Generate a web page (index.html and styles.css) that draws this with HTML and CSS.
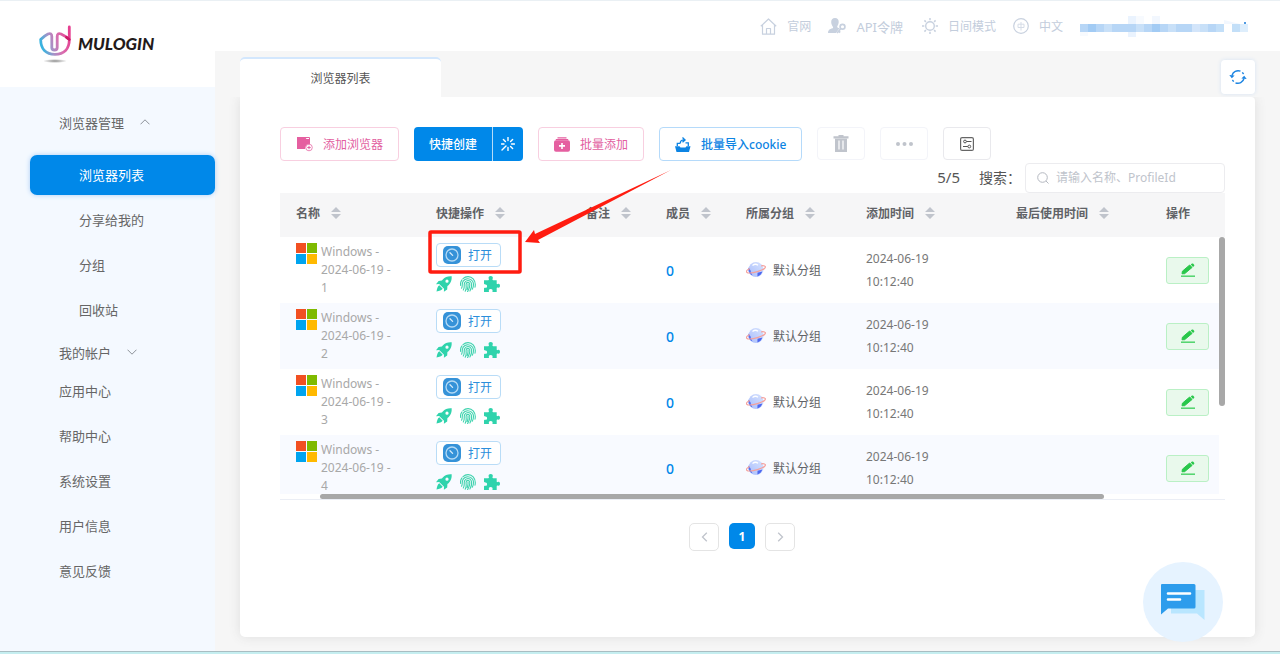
FILE: index.html
```html
<!DOCTYPE html>
<html lang="zh-CN">
<head>
<meta charset="utf-8">
<meta name="viewport" content="width=device-width, initial-scale=1">
<title>MuLogin</title>
<link rel="stylesheet" href="styles.css">
</head>
<body>
<svg class="sprite" aria-hidden="true">
  <defs>
    <linearGradient id="logo-grad" x1="0" y1="0.6" x2="1" y2="0.3">
      <stop offset="0" stop-color="#35b4e0"/>
      <stop offset="0.3" stop-color="#a394c8"/>
      <stop offset="0.6" stop-color="#d86fb0"/>
      <stop offset="1" stop-color="#e63f90"/>
    </linearGradient>
    <radialGradient id="logo-shadow">
      <stop offset="0" stop-color="#8c8c8c"/>
      <stop offset="1" stop-color="#8c8c8c" stop-opacity="0"/>
    </radialGradient>
    <linearGradient id="planet-grad" x1="0" y1="1" x2="1" y2="0">
      <stop offset="0" stop-color="#a9bdfb"/>
      <stop offset="1" stop-color="#d7e3ff"/>
    </linearGradient>
  </defs>
  <symbol id="i-sort" viewBox="0 0 10 12">
    <path d="M5 0 10 5H0zM5 12 0 7H10z" fill="#c0c4cc"/>
  </symbol>
  <symbol id="i-windows" viewBox="0 0 21 21">
    <path d="M0 0h10v10H0z" fill="#f25022"/><path d="M11 0h10v10H11z" fill="#7fba00"/>
    <path d="M0 11h10v10H0z" fill="#00a4ef"/><path d="M11 11h10v10H11z" fill="#ffb900"/>
  </symbol>
  <symbol id="i-dial" viewBox="0 0 18 18">
    <rect width="18" height="18" rx="5" fill="#3592d8"/>
    <circle cx="9" cy="9" r="6" fill="none" stroke="#b4daf5" stroke-width="1.3"/>
    <path d="M7 6.800 9.600 9.400" stroke="#d5ebfa" stroke-width="1.300" stroke-linecap="round"/>
  </symbol>
  <symbol id="i-rocket" viewBox="0 0 16 16">
    <path fill="#2fd3ac" fill-rule="evenodd" d="M15.700.3C12 0 9 1 6.800 3.500L5.900 4.600 2.600 4.900 0 8.300l3.200-.2L8 12.800l-.1 3L11.200 13.400l.2-3.300 1.100-.9C15 7 15.900 4 15.700.3zM11 6.800a1.600 1.600 0 1 1 0-3.200 1.600 1.600 0 0 1 0 3.200z"/>
    <path fill="#2fd3ac" d="M3.300 9.300 6.700 12.700C5.500 14.600 3.500 14.700.5 15.400 1.200 12.500 1.400 10.400 3.300 9.300z"/>
  </symbol>
  <symbol id="i-finger" viewBox="0 0 16 16">
    <g fill="none" stroke="#3fd3ae" stroke-width="1.100" stroke-linecap="round">
      <path d="M3 2.600C6-.2 10.500 0 13.200 2.800 15.300 5.200 15.700 8 15 11.200"/>
      <path d="M.6 9.500C.3 7.200.8 5.300 2 3.900M1.600 12.300C3 9.500 1.500 8.300 3 5.500 5 1.900 10.500 1.800 12.600 5.200 14 7.600 13.500 10.800 12.300 13.300"/>
      <path d="M3.300 14C5.200 11.100 3.500 9.200 4.600 6.700 6 3.700 10 3.900 11.200 6.600 12.200 9.300 11.200 12.500 9.900 14.900"/>
      <path d="M5.200 15.200C7.200 12 5.500 9.500 6.300 7.500 7 5.900 9 6 9.600 7.600 10.200 10 9.200 13 7.600 15.600M8 8.100C8.200 10.400 7.900 12 7.200 13.500"/>
    </g>
  </symbol>
  <symbol id="i-puzzle" viewBox="0 0 16 16">
    <path fill="#2fd3ac" d="M0 4.200h4.200C5 4.200 5.100 3.600 4.800 3 4 1.300 5.100 0 6.700 0s2.700 1.300 1.900 3c-.3.600-.2 1.200.6 1.200h3.500v3.300c0 .7.500.8 1.100.5C15.100 7.400 16 8.500 16 9.800s-.9 2.400-2.200 1.800c-.6-.3-1.100-.1-1.100.6V16H9.200c-.8 0-.9-.6-.7-1.100.4-1.100-.5-1.900-1.800-1.900s-2.200.8-1.800 1.900c.2.500.1 1.100-.7 1.100H0v-3.600c0-.7.600-.7 1.100-.6 1.200.3 2-.5 2-1.600s-.8-2-2-1.600C.6 8.400 0 8.200 0 7.600z"/>
  </symbol>
  <symbol id="i-planet" viewBox="0 0 20 18">
    <circle cx="10" cy="8.500" r="7.500" fill="url(#planet-grad)"/>
    <path d="M2.600 6.600C3.500 8.500 5 9 5 11.500l1.500 3C3.500 13.600 1.700 10 2.600 6.600z" fill="#5572f3"/>
    <path d="M11.500 11.800c2-.3 3-1.500 4.800-1-1 2.800-2.800 4-4.900 4.700z" fill="#4d68f0"/>
    <path d="M6.500 4.400c2-1.500 4-1.400 5.500-.2" stroke="#fff" stroke-width="1.300" fill="none"/>
    <path d="M3.400 7.800C-.2 9.500-.4 11.200 1.800 11.800 6 12.800 17.500 9.500 19.200 6.600 20 5 17.800 4.500 15.600 4.800" fill="none" stroke="#f4a09c" stroke-width="1.200" stroke-linecap="round"/>
  </symbol>
  <symbol id="i-edit" viewBox="0 0 14 14">
    <path d="M1 10.800 1.400 8.200 8.700 2 11 4.500 3.600 10.700z" fill="#28c74a" stroke="#28c74a" stroke-linejoin="round"/>
    <path d="M9.800 1.500 11 .6q.7-.4 1.300.2l.8.9q.6.700 0 1.300L12 4z" fill="#28c74a"/>
    <path d="M0 13.200H14" stroke="#4fd36b" stroke-width="1.500"/>
  </symbol>
</svg>

<div class="page">
  <div class="layout">
    <aside class="sidebar">
      <a class="logo" href="#">
        <svg class="logo-mark" viewBox="0 0 33 38" aria-hidden="true">
          <ellipse cx="16" cy="36" rx="12" ry="2" fill="url(#logo-shadow)"/>
          <path d="M30.300 2V14.500C30.300 24 25 29.300 16 29.300S1.700 24 1.700 14.500Q5 11 9 9Q12.800 7.500 12.800 11.500V22.500Q12.800 25 15.500 25T18.200 22.500V11.500Q18.200 7.500 22 9Q26.500 11 30.300 14.500" fill="none" stroke="url(#logo-grad)" stroke-width="2.800" stroke-linecap="round" stroke-linejoin="round"/>
          <path d="M27.500 12.300 30.300 14.500" fill="none" stroke="#cb1a68" stroke-width="2.800" stroke-linecap="round"/>
        </svg>
        <span class="logo-text">MULOGIN</span>
      </a>
      <nav class="menu">
        <button class="menu-head" type="button">浏览器管理
          <svg class="caret" viewBox="0 0 10 6" aria-hidden="true"><path d="M.5 5.300 5 .8 9.500 5.300" fill="none" stroke="#8d9299"/></svg>
        </button>
        <div class="submenu">
          <a class="menu-item sub active" href="#">浏览器列表</a>
          <a class="menu-item sub" href="#">分享给我的</a>
          <a class="menu-item sub" href="#">分组</a>
          <a class="menu-item sub" href="#">回收站</a>
        </div>
        <button class="menu-head" type="button">我的帐户
          <svg class="caret" viewBox="0 0 10 6" aria-hidden="true"><path d="M.5 .7 5 5.200 9.500 .7" fill="none" stroke="#8d9299"/></svg>
        </button>
        <div class="mainmenu">
          <a class="menu-item" href="#">应用中心</a>
          <a class="menu-item" href="#">帮助中心</a>
          <a class="menu-item" href="#">系统设置</a>
          <a class="menu-item" href="#">用户信息</a>
          <a class="menu-item" href="#">意见反馈</a>
        </div>
      </nav>
    </aside>

    <div class="content">
      <header class="topbar">
        <a class="top-link" href="#">
          <svg width="17" height="17" viewBox="0 0 17 17" aria-hidden="true"><path d="M.8 8.200 8.500 1l7.700 7.200M2.500 7v9.200h12V7M6.500 16v-5.500h4V16" fill="none" stroke="#c8d1df" stroke-width="1.200" stroke-linejoin="round"/></svg>
          官网</a>
        <a class="top-link api" href="#">
          <svg width="18" height="16" viewBox="0 0 18 16" aria-hidden="true"><path d="M7 0c2.600 0 3.900 1.700 3.700 4.200C10.500 6.500 9.500 7.600 9.200 8.500c0 1 1 1.500 2.300 1.800L8 15H0c.2-3 1.500-3.800 4.700-4.700.6-.3.500-1.300 0-1.900C3.900 7.300 3.300 6 3.200 4.200 3.100 1.700 4.400 0 7 0z" fill="#c8d1df"/><circle cx="14.500" cy="8.800" r="2.400" fill="#fff" stroke="#c8d1df" stroke-width="1.700"/><path d="M12.700 10.700 9 15M10.700 13.200l1.500 1.300" stroke="#c8d1df" stroke-width="1.700"/></svg>
          API令牌</a>
        <a class="top-link" href="#">
          <svg width="16" height="16" viewBox="0 0 16 16" aria-hidden="true"><circle cx="8" cy="8" r="4.300" fill="none" stroke="#c8d1df" stroke-width="1.400"/><path d="M8 0v2.300M8 13.700V16M0 8h2.300M13.700 8H16M2.400 2.400l1.500 1.500M12.100 12.100l1.500 1.500M2.400 13.600l1.500-1.500M12.100 3.900l1.500-1.500" stroke="#c8d1df" stroke-width="1.500"/></svg>
          日间模式</a>
        <a class="top-link" href="#">
          <svg width="16" height="16" viewBox="0 0 16 16" aria-hidden="true"><circle cx="8" cy="8" r="7.300" fill="none" stroke="#c8d1df" stroke-width="1.200"/><path d="M5 6.200h6v3.300H5zM8 4v8.500" fill="none" stroke="#d5dce7"/></svg>
          中文</a>
        <svg class="user-mask" width="168" height="28" viewBox="0 -4 168 28" aria-hidden="true">
          <path d="M48 0h8v8h-8zM48 16h8v5h-8z" fill="#eaf3fe"/><path d="M56 0h8v8h-8zM0 16h8v4H0z" fill="#f7fafe"/><path d="M72 0h8v8h-8zM144 4l16 4h-16z" fill="#f2f7fe"/>
          <path d="M0 8h144v8H0z" fill="#b7d6f6"/>
          <path d="M8 8h8v8H8zM72 8h8v8h-8z" fill="#a2cbf4"/>
          <path d="M24 8h8v8h-8zM56 8h8v8h-8zM88 8h8v8h-8zM120 8h8v8h-8z" fill="#c8e0f8"/>
          <path d="M112 8h8v8h-8z" fill="#d3e5fa"/><path d="M152 8h8v8h-8zM136 8h8v8h-8z" fill="#c3dff8"/><path d="M160 8h8v8h-8z" fill="#deeefc"/>
          <circle cx="165" cy="7" r="1" fill="#1479d8"/>
        </svg>
      </header>

      <main class="main">
        <div class="tab-row">
          <button class="tab" type="button">浏览器列表</button>
          <button class="refresh" type="button" aria-label="刷新">
            <svg width="18" height="16" viewBox="0 0 18 16" aria-hidden="true"><path d="M3 6.500A6.300 6.300 0 0 1 11.500 2.200M13.300 3.400 14.600 5M15 9.500A6.300 6.300 0 0 1 6.500 13.800M4.700 12.600 3.400 11" fill="none" stroke="#1b84e2" stroke-width="1.400"/><path d="M.3 6 5.600 6.600 2.800 9.300zM17.700 10 12.400 9.400 15.200 6.700z" fill="#1b84e2"/></svg>
          </button>
        </div>
        <section class="card">
          <div class="toolbar">
            <button class="btn pink" type="button">
              <svg width="17" height="16" viewBox="0 0 17 16" aria-hidden="true"><path d="M1 1h8l1.500 2H14v6a4 4 0 0 0-5 4H1z" fill="#e55fa0"/><path d="M9 1.500h4.500v2" fill="none" stroke="#e55fa0"/><circle cx="13" cy="11.500" r="3.300" fill="#fff" stroke="#ec86b7"/><path d="M11.300 11.500h3.400M13 9.800v3.400" stroke="#e55fa0"/></svg>
              添加浏览器</button>
            <div class="split">
              <button class="split-main" type="button">快捷创建</button>
              <button class="split-side" type="button" aria-label="快捷设置">
                <svg width="14" height="14" viewBox="0 0 14 14" aria-hidden="true"><path d="M7 .5v3M7 10.500v3M10.500 7h3M9.600 4.400l2-2M9.600 9.600l2 2M4.400 4.400l-2-2M5 9 1 13M.5 7h2.500" stroke="#fff" stroke-width="1.400" stroke-linecap="round"/></svg>
              </button>
            </div>
            <button class="btn pink" type="button">
              <svg width="16" height="15" viewBox="0 0 16 15" aria-hidden="true"><path d="M3.500 .8h9M1.800 2.600h12.400" stroke="#e55fa0" stroke-width="1.300"/><rect y="3.200" width="16" height="11.500" rx="2" fill="#e55fa0"/><path d="M5 8.900h6M8 5.900v6" stroke="#fff" stroke-width="1.600"/></svg>
              批量添加</button>
            <button class="btn blue" type="button">
              <svg width="16" height="15" viewBox="0 0 16 15" aria-hidden="true"><path d="M0 9.300h4.500l1 1.200h5L11.500 9.300H15.500L14 15H1.500z" fill="#0d84e3"/><path d="M2.300 9V6.300H5.500M13.300 9V5.800H10.500" fill="none" stroke="#0d84e3" stroke-width="1.300"/><path d="M5.300 6C5.300 3.500 7 2.900 9.500 2.900M7.500 .5 10 2.900 7.500 5.300" fill="none" stroke="#0d84e3" stroke-width="1.400"/></svg>
              批量导入cookie</button>
            <button class="btn icon-btn pale" type="button" aria-label="删除">
              <svg width="16" height="17" viewBox="0 0 16 17" aria-hidden="true"><path fill="#c0c4cc" d="M5.500 0h5v1.300H15.500v2.300H.5V1.300h5z"/><path d="M2 3.600h12V17H2z" fill="#c0c4cc"/><path d="M6 5.500v9M10 5.500v9" stroke="#fff" stroke-width="1.200"/></svg>
            </button>
            <button class="btn icon-btn pale" type="button" aria-label="更多">
              <svg width="17" height="4" viewBox="0 0 17 4" aria-hidden="true"><g fill="#c0c4cc"><circle cx="2" cy="2" r="2"/><circle cx="8.500" cy="2" r="2"/><circle cx="15" cy="2" r="2"/></g></svg>
            </button>
            <button class="btn icon-btn" type="button" aria-label="列设置">
              <svg width="14" height="14" viewBox="0 0 14 14" aria-hidden="true"><rect x=".6" y=".6" width="12.800" height="12.800" rx="1.500" fill="none" stroke="#666" stroke-width="1.200"/><circle cx="5" cy="4.500" r="1.400" fill="none" stroke="#555"/><circle cx="9.300" cy="9.500" r="1.400" fill="none" stroke="#555"/><path d="M6.500 4.500H11.500M3 9.500H7.800" stroke="#555"/></svg>
            </button>
          </div>

          <div class="search-row">
            <span class="count">5/5</span>
            <label class="search-label" for="q">搜索：</label>
            <div class="search-box">
              <svg width="12" height="12" viewBox="0 0 12 12" aria-hidden="true"><circle cx="5.500" cy="5.500" r="4.800" fill="none" stroke="#b4b8c0"/><path d="M9 9l2.500 2.500" stroke="#b4b8c0"/></svg>
              <input id="q" type="text" placeholder="请输入名称、ProfileId">
            </div>
          </div>

          <div class="table-wrap">
            <div class="table-clip">
              <table class="grid">
                <colgroup><col class="c-name"><col class="c-quick"><col class="c-small"><col class="c-small"><col class="c-group"><col class="c-time"><col><col class="c-op"></colgroup>
                <thead>
                  <tr>
                    <th><span class="th">名称<svg class="sort"><use href="#i-sort"/></svg></span></th>
                    <th><span class="th">快捷操作<svg class="sort"><use href="#i-sort"/></svg></span></th>
                    <th><span class="th">备注<svg class="sort"><use href="#i-sort"/></svg></span></th>
                    <th><span class="th">成员<svg class="sort"><use href="#i-sort"/></svg></span></th>
                    <th><span class="th">所属分组<svg class="sort"><use href="#i-sort"/></svg></span></th>
                    <th><span class="th">添加时间<svg class="sort"><use href="#i-sort"/></svg></span></th>
                    <th><span class="th">最后使用时间<svg class="sort"><use href="#i-sort"/></svg></span></th>
                    <th><span class="th">操作</span></th>
                  </tr>
                </thead>
                <tbody>
                  <tr>
                    <td><div class="name"><svg class="os"><use href="#i-windows"/></svg><span>Windows - 2024-06-19 - 1</span></div></td>
                    <td><div class="quick"><button class="open" type="button"><svg class="dial"><use href="#i-dial"/></svg>打开</button><div class="tools"><svg><use href="#i-rocket"/></svg><svg><use href="#i-finger"/></svg><svg><use href="#i-puzzle"/></svg></div></div></td>
                    <td></td>
                    <td class="num">0</td>
                    <td><div class="group"><svg class="planet"><use href="#i-planet"/></svg>默认分组</div></td>
                    <td class="time">2024-06-19<br>10:12:40</td>
                    <td></td>
                    <td><button class="edit" type="button" aria-label="编辑"><svg><use href="#i-edit"/></svg></button></td>
                  </tr>
                  <tr>
                    <td><div class="name"><svg class="os"><use href="#i-windows"/></svg><span>Windows - 2024-06-19 - 2</span></div></td>
                    <td><div class="quick"><button class="open" type="button"><svg class="dial"><use href="#i-dial"/></svg>打开</button><div class="tools"><svg><use href="#i-rocket"/></svg><svg><use href="#i-finger"/></svg><svg><use href="#i-puzzle"/></svg></div></div></td>
                    <td></td>
                    <td class="num">0</td>
                    <td><div class="group"><svg class="planet"><use href="#i-planet"/></svg>默认分组</div></td>
                    <td class="time">2024-06-19<br>10:12:40</td>
                    <td></td>
                    <td><button class="edit" type="button" aria-label="编辑"><svg><use href="#i-edit"/></svg></button></td>
                  </tr>
                  <tr>
                    <td><div class="name"><svg class="os"><use href="#i-windows"/></svg><span>Windows - 2024-06-19 - 3</span></div></td>
                    <td><div class="quick"><button class="open" type="button"><svg class="dial"><use href="#i-dial"/></svg>打开</button><div class="tools"><svg><use href="#i-rocket"/></svg><svg><use href="#i-finger"/></svg><svg><use href="#i-puzzle"/></svg></div></div></td>
                    <td></td>
                    <td class="num">0</td>
                    <td><div class="group"><svg class="planet"><use href="#i-planet"/></svg>默认分组</div></td>
                    <td class="time">2024-06-19<br>10:12:40</td>
                    <td></td>
                    <td><button class="edit" type="button" aria-label="编辑"><svg><use href="#i-edit"/></svg></button></td>
                  </tr>
                  <tr>
                    <td><div class="name"><svg class="os"><use href="#i-windows"/></svg><span>Windows - 2024-06-19 - 4</span></div></td>
                    <td><div class="quick"><button class="open" type="button"><svg class="dial"><use href="#i-dial"/></svg>打开</button><div class="tools"><svg><use href="#i-rocket"/></svg><svg><use href="#i-finger"/></svg><svg><use href="#i-puzzle"/></svg></div></div></td>
                    <td></td>
                    <td class="num">0</td>
                    <td><div class="group"><svg class="planet"><use href="#i-planet"/></svg>默认分组</div></td>
                    <td class="time">2024-06-19<br>10:12:40</td>
                    <td></td>
                    <td><button class="edit" type="button" aria-label="编辑"><svg><use href="#i-edit"/></svg></button></td>
                  </tr>
                </tbody>
              </table>
            </div>
            <div class="track-x"><div class="thumb-x"></div></div>
            <div class="track-y"><div class="thumb-y"></div></div>
          </div>

          <nav class="pager" aria-label="分页">
            <button class="page-arrow" type="button" aria-label="上一页"><svg width="7" height="10" viewBox="0 0 7 10"><path d="M5.800 .8 1.500 5 5.800 9.200" fill="none" stroke="#c0c4cc" stroke-width="1.300"/></svg></button>
            <button class="page-num" type="button">1</button>
            <button class="page-arrow" type="button" aria-label="下一页"><svg width="7" height="10" viewBox="0 0 7 10"><path d="M1.200 .8 5.500 5 1.200 9.200" fill="none" stroke="#c0c4cc" stroke-width="1.300"/></svg></button>
          </nav>
        </section>
      </main>
    </div>
  </div>
  <div class="bottom-strip"></div>

  <svg class="callout" width="244" height="106" viewBox="0 0 244 106" aria-hidden="true">
    <rect x="2" y="63" width="90" height="40" rx="1" fill="none" stroke="#ff1c10" stroke-width="3.500"/>
    <path d="M243 1 110 71 112 74 97 73 106 61 107 65z" fill="#ff1c10"/>
  </svg>
  <button class="chat" type="button" aria-label="在线客服">
    <svg width="44" height="36" viewBox="0 0 44 36" aria-hidden="true">
      <path d="M10 6H43.500V36L36 29.500H10z" fill="#b9e6ff"/>
      <path d="M0 1q0-1 1-1H33q1.500 0 1.500 1.500V23q0 1.500-1.500 1.500H7L0 30.500z" fill="#2d9cec"/>
      <path d="M7 9.500H29M7 15.500H19" stroke="#fff" stroke-width="2.600" stroke-linecap="round"/>
    </svg>
  </button>
</div>
</body>
</html>
```
FILE: styles.css
```css
* { box-sizing: border-box; }

body {
  margin: 0;
  font-family: "Noto Sans", "Noto Sans CJK SC", sans-serif;
  font-size: 12px;
  color: #606266;
}

button, input { font: inherit; color: inherit; }
button { cursor: pointer; padding: 0; border: 0; background: none; }
a { color: inherit; text-decoration: none; }
svg { display: block; flex: none; }
.sprite { position: absolute; width: 0; height: 0; }

.page {
  position: relative;
  display: flex;
  flex-direction: column;
  min-height: 100vh;
  background: #f6f6f6;
  border-top: 1px solid #eaf0f4;
}
.layout { display: flex; flex: 1; }
.bottom-strip { height: 3px; background: #c5eef0; border-top: 1px solid #a9bdc2; }

/* Sidebar */
.sidebar { flex: none; width: 215px; background: #f4f9ff; }
.logo {
  display: flex;
  align-items: flex-start;
  gap: 6px;
  height: 86px;
  padding: 24px 0 0 39px;
  background: #fff;
}
.logo-mark { width: 33px; height: 38px; }
.logo-text {
  margin-top: 9px;
  font: italic 900 17px/20px Lato, sans-serif;
  color: #231a1a;
}
.menu { padding: 18px 0; font-size: 13px; color: #666; }
.menu-head {
  display: flex;
  align-items: center;
  gap: 16px;
  width: 100%;
  height: 36px;
  padding: 0 0 2px 59px;
}
.caret { width: 10px; height: 6px; }
.submenu {
  display: flex;
  flex-direction: column;
  gap: 5px;
  margin: 14px 0 5px;
  padding-left: 30px;
}
.mainmenu { display: flex; flex-direction: column; gap: 5px; }
.menu-item { display: flex; align-items: center; height: 40px; padding: 0 0 2px 59px; }
.menu-item.sub { padding-left: 49px; }
.menu-item.active {
  color: #fff;
  background: #0088e9;
  border-radius: 7px;
  box-shadow: 0 0 5px #a9cdf5;
}

/* Top bar */
.content { display: flex; flex: 1; flex-direction: column; min-width: 0; }
.topbar {
  display: flex;
  align-items: center;
  justify-content: flex-end;
  gap: 17px;
  height: 50px;
  padding-right: 32px;
  background: #fff;
}
.top-link { display: flex; align-items: center; gap: 10px; color: #c3cddc; }
.top-link.api { font-size: 13px; padding-right: 2px; }

/* Tab and card */
.main { display: flex; flex: 1; flex-direction: column; padding: 6px 25px 14px; }
.tab-row { display: flex; justify-content: space-between; align-items: center; height: 40px; }
.tab {
  width: 201px;
  height: 40px;
  background: #fff;
  border-top: 2px solid #d3e7fd;
  border-radius: 5px 5px 0 0;
  color: #555;
}
.refresh {
  display: grid;
  place-items: center;
  width: 34px;
  height: 34px;
  background: #fff;
  border-radius: 4px;
  box-shadow: 0 0 4px #d5e3f3;
}
.card {
  flex: 1;
  padding: 30px 30px 30px 40px;
  background: #fff;
  border-radius: 0 4px 5px 5px;
  box-shadow: 0 0 12px #dedede;
  clip-path: inset(0 -20px -14px -20px);
}

.toolbar { display: flex; gap: 15px; align-items: flex-start; }
.btn {
  display: flex;
  align-items: center;
  justify-content: center;
  gap: 10px;
  height: 34px;
  padding: 0 15px;
  background: #fff;
  border: 1px solid #e9e9ed;
  border-radius: 4px;
  white-space: nowrap;
}
.pink { color: #e2609f; border-color: #f8cfe0; }
.blue { color: #0d84e3; border-color: #b5dafa; font-weight: 500; }
.icon-btn { width: 48px; height: 33px; padding: 0; }
.pale { border-color: #f3f4f9; }
.split { display: flex; height: 34px; border-radius: 4px; overflow: hidden; }
.split button { background: #0088e9; color: #fff; font-weight: 500; }
.split-main { width: 78px; }
.split .split-side { display: grid; place-items: center; width: 31px; border-left: 1px solid #b5dcf8; }

.search-row { display: flex; align-items: center; justify-content: flex-end; height: 30px; margin-top: 2px; color: #555; }
.count { font-size: 15px; margin-right: 19px; padding-bottom: 3px; }
.search-label { font-size: 14px; margin-right: 4px; padding-bottom: 3px; }
.search-box {
  display: flex;
  align-items: center;
  gap: 7px;
  width: 200px;
  height: 30px;
  padding: 0 11px;
  border: 1px solid #ececef;
  border-radius: 4px;
}
.search-box input { width: 100%; min-width: 0; padding: 0 0 2px; border: 0; outline: 0; background: none; }
.search-box input::placeholder { color: #c0c4cc; }

/* Table */
.table-wrap { position: relative; border-bottom: 1px solid #ebeef5; }
.table-clip { height: 301px; overflow: hidden; }
.grid { width: 100%; table-layout: fixed; border-collapse: collapse; }
.c-name { width: 140px; }
.c-quick { width: 150px; }
.c-small { width: 80px; }
.c-group { width: 120px; }
.c-time { width: 150px; }
.c-op { width: 75px; }
.grid th {
  height: 44px;
  padding: 0 0 0 16px;
  background: #f6f6f7;
  font-weight: 700;
  text-align: left;
  white-space: nowrap;
}
.th { display: flex; align-items: center; gap: 11px; padding-bottom: 4px; }
.sort { width: 10px; height: 12px; }
.grid td { height: 66px; padding: 0 0 0 16px; }
.grid tbody tr:nth-child(even) { background: #f8faff; }
.name { display: flex; gap: 4px; padding-right: 24px; color: #a8a8a8; line-height: 18px; }
.os { width: 21px; height: 21px; }
.quick { display: flex; flex-direction: column; gap: 9px; padding-bottom: 5px; }
.open {
  display: flex;
  align-items: center;
  gap: 7px;
  width: 65px;
  height: 24px;
  padding-left: 6px;
  background: #fff;
  border: 1px solid #b9dcf7;
  border-radius: 4px;
  color: #2b8edb;
}
.dial { width: 18px; height: 18px; }
.tools { display: flex; gap: 8px; }
.tools svg { width: 16px; height: 16px; }
.grid .num { color: #0088e9; font-size: 14px; font-weight: 500; }
.group { display: flex; align-items: center; gap: 7px; }
.planet { width: 20px; height: 18px; }
.time { line-height: 23px; color: #777; }
.edit {
  display: grid;
  place-items: center;
  width: 43px;
  height: 27px;
  background: #e9f9ec;
  border: 1px solid #baf0c5;
  border-radius: 3px;
}
.edit svg { width: 14px; height: 14px; }
.track-x { height: 5px; }
.thumb-x { width: 83%; height: 5px; margin-left: 40px; background: #a8a8a8; border-radius: 3px; }
.track-y { position: absolute; top: 44px; right: 0; bottom: 0; width: 6px; background: #fff; }
.thumb-y { height: 169px; background: #a8a8a8; border-radius: 3px; }

/* Pager */
.pager { display: flex; justify-content: center; gap: 10px; padding: 23px 21px 0 0; }
.page-arrow {
  display: grid;
  place-items: center;
  width: 30px;
  height: 28px;
  border: 1px solid #e4e4e4;
  border-radius: 5px;
}
.page-num { width: 26px; height: 26px; background: #0088e9; border-radius: 5px; color: #fff; font-weight: 700; }

/* Overlays */
.callout { position: absolute; top: 168px; left: 428px; pointer-events: none; }
.chat {
  position: absolute;
  right: 57px;
  bottom: 12px;
  display: grid;
  place-items: center;
  width: 80px;
  height: 80px;
  background: #e6f3ff;
  border-radius: 50%;
}
```
